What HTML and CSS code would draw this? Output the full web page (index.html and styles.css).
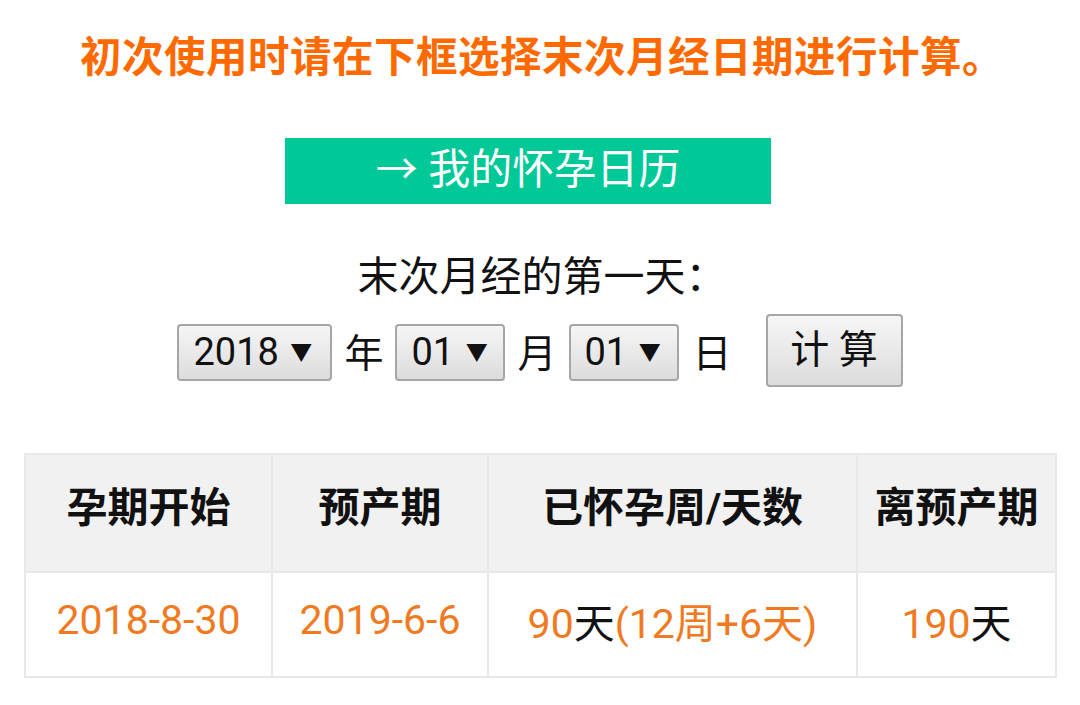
FILE: index.html
```html
<!DOCTYPE html>
<html lang="zh-CN">
<head>
<meta charset="utf-8">
<link rel="stylesheet" href="styles.css">
</head>
<body>
<div class="page">
  <h1 class="notice">初次使用时请在下框选择末次月经日期进行计算。</h1>
  <div class="cal-wrap"><a class="cal-btn">→ 我的怀孕日历</a></div>
  <div class="label">末次月经的第一天：</div>
  <div class="form-row">
    <span class="sel sel-year">2018 <span class="arr">▼</span></span>
    <span class="unit">年</span>
    <span class="sel">01 <span class="arr">▼</span></span>
    <span class="unit">月</span>
    <span class="sel">01 <span class="arr">▼</span></span>
    <span class="unit unit-last">日</span>
    <span class="calc">计 算</span>
  </div>
  <table class="result">
    <colgroup>
      <col class="c1"><col class="c2"><col class="c3"><col class="c4">
    </colgroup>
    <thead>
      <tr><th>孕期开始</th><th>预产期</th><th>已怀孕周/天数</th><th>离预产期</th></tr>
    </thead>
    <tbody>
      <tr>
        <td><span class="or">2018-8-30</span></td>
        <td><span class="or">2019-6-6</span></td>
        <td><span class="or">90</span>天<span class="or">(12周+6天)</span></td>
        <td><span class="or">190</span>天</td>
      </tr>
    </tbody>
  </table>
</div>
</body>
</html>
```
FILE: styles.css
```css
html, body {
  margin: 0;
  padding: 0;
  background: #fff;
}
body {
  font-family: Roboto, "Noto Sans CJK SC", sans-serif;
  color: #111;
}
.page {
  width: 1080px;
  padding-top: 30px;
}
.notice {
  margin: 0;
  padding-left: 4px;
  text-align: center;
  font-size: 41.5px;
  line-height: 56px;
  font-weight: bold;
  color: #ff6a00;
  letter-spacing: 0.5px;
}
.cal-wrap {
  display: flex;
  justify-content: center;
  margin-top: 52px;
  padding-right: 24px;
}
.cal-btn {
  display: block;
  width: 486px;
  height: 66px;
  line-height: 64px;
  background: #00c896;
  color: #fff;
  font-size: 42px;
  text-align: center;
}
.label {
  margin-top: 46px;
  text-align: center;
  font-size: 41px;
  line-height: 54px;
  padding-left: 4px;
}
.form-row {
  display: flex;
  justify-content: center;
  align-items: center;
  margin-top: 9px;
  height: 74px;
}
.sel {
  box-sizing: border-box;
  height: 57px;
  width: 110px;
  margin-top: 4px;
  border: 2px solid #a6a6a6;
  border-radius: 4px;
  background: linear-gradient(#f6f6f6, #dcdcdc);
  font-size: 38px;
  line-height: 52px;
  padding-left: 14px;
  white-space: nowrap;
}
.sel-year {
  width: 155px;
}
.arr {
  font-size: 22px;
  vertical-align: 5px;
  margin-left: 2px;
}
.unit {
  font-size: 39px;
  margin: 0 12px;
}
.unit-last {
  margin-left: 14px;
  margin-right: 34px;
}
.calc {
  box-sizing: border-box;
  width: 137px;
  height: 73px;
  border: 2px solid #a6a6a6;
  border-radius: 4px;
  background: linear-gradient(#f6f6f6, #dcdcdc);
  font-size: 39px;
  line-height: 68px;
  text-align: center;
}
.result {
  margin: 66px 0 0 24px;
  width: 1031px;
  border-collapse: collapse;
  table-layout: fixed;
}
.c1 { width: 247px; }
.c2 { width: 216px; }
.c3 { width: 369px; }
.c4 { width: 199px; }
.result th, .result td {
  border: 2px solid #e8e8e8;
  text-align: center;
  white-space: nowrap;
}
.result th {
  background: #f1f1f1;
  height: 98px;
  padding: 0 0 18px;
  font-size: 41px;
  font-weight: bold;
  color: #111;
}
.result td {
  height: 93px;
  padding: 0 0 10px;
  font-size: 41px;
  color: #111;
}
.or {
  color: #f07a22;
}
```
